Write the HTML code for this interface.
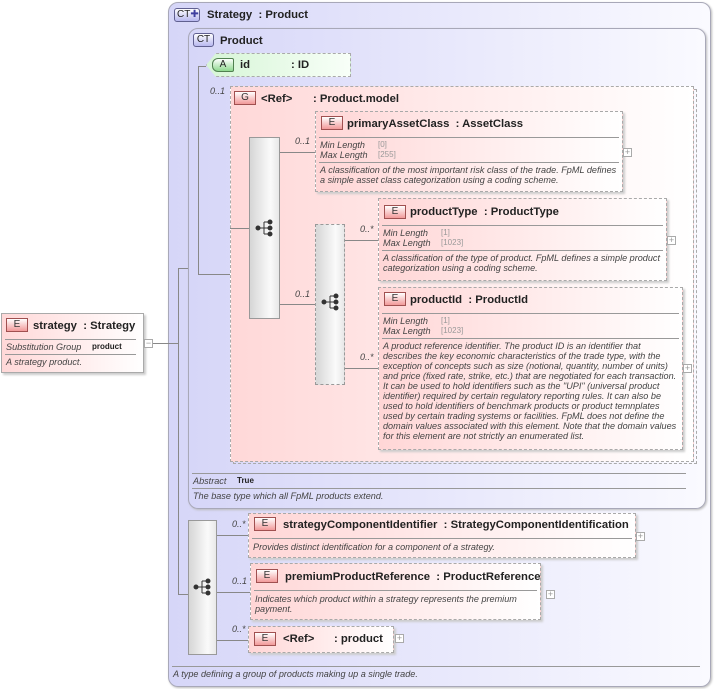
<!DOCTYPE html>
<html><head><meta charset="utf-8"><style>
*{margin:0;padding:0;box-sizing:border-box}
body{width:718px;height:689px;background:#fff;position:relative;overflow:hidden;font-family:"Liberation Sans",Arial,sans-serif;color:#222}
.a{position:absolute}
.ct{position:absolute;border:1px solid #a8a8b8;border-radius:10px;background:linear-gradient(to right,#d6d6f8,#fafaff);box-shadow:1px 1px 2px #bbb}
.el{position:absolute;border:1px dashed #a9a9a9;background:linear-gradient(to right,#ffd6d6,#fff);box-shadow:2px 2px 2px #ccc}
.badge{position:absolute;width:22px;height:14px;border:1px solid #a05050;background:linear-gradient(#fff,#f29a9a);font-size:10px;text-align:center;line-height:12px;color:#333}
.t{position:absolute;font-weight:bold;font-size:11.3px;white-space:nowrap;margin-top:2px}
.sep{position:absolute;height:1px;background:#999}
.it{position:absolute;font-style:italic;font-size:9.1px;line-height:10.3px;color:#444;white-space:nowrap}
.v{position:absolute;font-size:8px;color:#999;white-space:nowrap}
.seq{position:absolute;border:1px solid #999;background:linear-gradient(to right,#d6d6d6,#fafafa 70%,#e8e8e8)}
.ln{position:absolute;background:#888}
.m{position:absolute;font-style:italic;font-size:9px;color:#444}
.plus{position:absolute;width:9px;height:9px;border:1px solid #aaa;background:#fff;font-size:9px;line-height:7px;text-align:center;color:#999}
</style></head><body>

<div class="ct" style="left:168px;top:2px;width:543px;height:685px"></div>
<div class="a" style="left:174px;top:8px;width:26px;height:14px;border:1px solid #606090;border-radius:3px;background:linear-gradient(#fff,#b8b8f0);font-size:10px;line-height:12px;padding-left:2px">CT<span style="color:#4040a0">✚</span></div>
<div class="t" style="left:207px;top:7px">Strategy&nbsp; : Product</div>

<div class="ct" style="left:188px;top:28px;width:518px;height:481px"></div>
<div class="a" style="left:193px;top:33px;width:21px;height:14px;border:1px solid #606090;border-radius:3px;background:linear-gradient(#fff,#b8b8f0);font-size:10px;line-height:12px;text-align:center">CT</div>
<div class="t" style="left:220px;top:33px">Product</div>

<div class="a" style="left:206px;top:53px;width:145px;height:24px;border:1px dashed #aaa;background:linear-gradient(to right,#d6f5d6,#f8fff8);clip-path:polygon(10px 0,100% 0,100% 100%,10px 100%,0 50%)"></div>
<div class="a" style="left:212px;top:58px;width:22px;height:14px;border:1px solid #508050;border-radius:6px 2px 2px 6px;background:linear-gradient(#fff,#8ed88e);font-size:10px;line-height:12px;text-align:center">A</div>
<div class="t" style="left:240px;top:57px">id</div>
<div class="t" style="left:291px;top:57px">: ID</div>

<div class="ln" style="left:198px;top:66px;width:1px;height:209px"></div>
<div class="ln" style="left:198px;top:66px;width:8px;height:1px"></div>
<div class="ln" style="left:198px;top:274px;width:32px;height:1px"></div>
<div class="ln" style="left:178px;top:268px;width:10px;height:1px"></div>
<div class="ln" style="left:178px;top:268px;width:1px;height:327px"></div>
<div class="ln" style="left:178px;top:594px;width:10px;height:1px"></div>
<div class="ln" style="left:144px;top:343px;width:34px;height:1px"></div>

<div class="m" style="left:210px;top:86px">0..1</div>
<div class="a" style="left:233px;top:89px;width:464px;height:375px;border:1px dashed #aaa"></div>
<div class="a" style="left:230px;top:86px;width:464px;height:376px;border:1px dashed #aaa;background:linear-gradient(to right,#ffd8d8,#fff)"></div>
<div class="badge" style="left:234px;top:91px;border-radius:0">G</div>
<div class="t" style="left:261px;top:91px">&lt;Ref&gt;</div>
<div class="t" style="left:313px;top:91px">: Product.model</div>

<div class="seq" style="left:249px;top:137px;width:31px;height:182px"></div>
<svg class="a" style="left:255px;top:219px" width="20" height="18"><g fill="#333" stroke="#333"><line x1="3" y1="9" x2="9" y2="9"/><line x1="9" y1="3" x2="9" y2="15"/><line x1="9" y1="3" x2="15" y2="3"/><line x1="9" y1="9" x2="15" y2="9"/><line x1="9" y1="15" x2="15" y2="15"/><circle cx="3" cy="9" r="2"/><circle cx="15" cy="3" r="2"/><circle cx="15" cy="9" r="2"/><circle cx="15" cy="15" r="2"/></g></svg>
<div class="ln" style="left:230px;top:228px;width:19px;height:1px"></div>
<div class="ln" style="left:280px;top:152px;width:35px;height:1px"></div>
<div class="ln" style="left:280px;top:304px;width:35px;height:1px"></div>
<div class="m" style="left:295px;top:136px">0..1</div>
<div class="m" style="left:295px;top:289px">0..1</div>

<div class="el" style="left:315px;top:111px;width:308px;height:81px"></div>
<div class="badge" style="left:321px;top:116px">E</div>
<div class="t" style="left:347px;top:116px">primaryAssetClass&nbsp; : AssetClass</div>
<div class="sep" style="left:319px;top:137px;width:300px"></div>
<div class="it" style="left:320px;top:140px">Min Length<br>Max Length</div>
<div class="v" style="left:378px;top:140px;line-height:10.3px">[0]<br>[255]</div>
<div class="sep" style="left:319px;top:162px;width:300px"></div>
<div class="it" style="left:320px;top:165px">A classification of the most important risk class of the trade. FpML defines<br>a simple asset class categorization using a coding scheme.</div>
<div class="plus" style="left:623px;top:148px">+</div>

<div class="seq" style="left:315px;top:224px;width:30px;height:161px;border-style:dashed"></div>
<svg class="a" style="left:321px;top:293px" width="20" height="18"><g fill="#333" stroke="#333"><line x1="3" y1="9" x2="9" y2="9"/><line x1="9" y1="3" x2="9" y2="15"/><line x1="9" y1="3" x2="15" y2="3"/><line x1="9" y1="9" x2="15" y2="9"/><line x1="9" y1="15" x2="15" y2="15"/><circle cx="3" cy="9" r="2"/><circle cx="15" cy="3" r="2"/><circle cx="15" cy="9" r="2"/><circle cx="15" cy="15" r="2"/></g></svg>
<div class="ln" style="left:345px;top:240px;width:33px;height:1px"></div>
<div class="ln" style="left:345px;top:368px;width:33px;height:1px"></div>
<div class="m" style="left:360px;top:224px">0..*</div>
<div class="m" style="left:360px;top:352px">0..*</div>

<div class="el" style="left:378px;top:198px;width:289px;height:83px"></div>
<div class="badge" style="left:384px;top:205px">E</div>
<div class="t" style="left:410px;top:204px">productType&nbsp; : ProductType</div>
<div class="sep" style="left:382px;top:225px;width:281px"></div>
<div class="it" style="left:383px;top:228px">Min Length<br>Max Length</div>
<div class="v" style="left:441px;top:228px;line-height:10.3px">[1]<br>[1023]</div>
<div class="sep" style="left:382px;top:250px;width:281px"></div>
<div class="it" style="left:383px;top:253px">A classification of the type of product. FpML defines a simple product<br>categorization using a coding scheme.</div>
<div class="plus" style="left:667px;top:236px">+</div>

<div class="el" style="left:378px;top:287px;width:305px;height:163px"></div>
<div class="badge" style="left:384px;top:292px">E</div>
<div class="t" style="left:410px;top:292px">productId&nbsp; : ProductId</div>
<div class="sep" style="left:382px;top:313px;width:297px"></div>
<div class="it" style="left:383px;top:316px">Min Length<br>Max Length</div>
<div class="v" style="left:441px;top:316px;line-height:10.3px">[1]<br>[1023]</div>
<div class="sep" style="left:382px;top:338px;width:297px"></div>
<div class="it" style="left:383px;top:341px;line-height:10px">A product reference identifier. The product ID is an identifier that<br>describes the key economic characteristics of the trade type, with the<br>exception of concepts such as size (notional, quantity, number of units)<br>and price (fixed rate, strike, etc.) that are negotiated for each transaction.<br>It can be used to hold identifiers such as the "UPI" (universal product<br>identifier) required by certain regulatory reporting rules. It can also be<br>used to hold identifiers of benchmark products or product temnplates<br>used by certain trading systems or facilities. FpML does not define the<br>domain values associated with this element. Note that the domain values<br>for this element are not strictly an enumerated list.</div>
<div class="plus" style="left:683px;top:364px">+</div>

<div class="sep" style="left:192px;top:473px;width:494px"></div>
<div class="it" style="left:193px;top:476px">Abstract</div>
<div class="a" style="left:237px;top:476px;font-size:8px;font-weight:bold">True</div>
<div class="sep" style="left:192px;top:488px;width:494px"></div>
<div class="it" style="left:193px;top:491px">The base type which all FpML products extend.</div>

<div class="seq" style="left:188px;top:520px;width:29px;height:135px"></div>
<svg class="a" style="left:193px;top:578px" width="20" height="18"><g fill="#333" stroke="#333"><line x1="3" y1="9" x2="9" y2="9"/><line x1="9" y1="3" x2="9" y2="15"/><line x1="9" y1="3" x2="15" y2="3"/><line x1="9" y1="9" x2="15" y2="9"/><line x1="9" y1="15" x2="15" y2="15"/><circle cx="3" cy="9" r="2"/><circle cx="15" cy="3" r="2"/><circle cx="15" cy="9" r="2"/><circle cx="15" cy="15" r="2"/></g></svg>
<div class="ln" style="left:217px;top:535px;width:31px;height:1px"></div>
<div class="ln" style="left:217px;top:592px;width:33px;height:1px"></div>
<div class="ln" style="left:217px;top:640px;width:31px;height:1px"></div>
<div class="m" style="left:232px;top:519px">0..*</div>
<div class="m" style="left:232px;top:576px">0..1</div>
<div class="m" style="left:232px;top:624px">0..*</div>

<div class="el" style="left:248px;top:513px;width:388px;height:45px"></div>
<div class="badge" style="left:254px;top:517px">E</div>
<div class="t" style="left:283px;top:517px">strategyComponentIdentifier&nbsp; : StrategyComponentIdentification</div>
<div class="sep" style="left:252px;top:538px;width:380px"></div>
<div class="it" style="left:253px;top:542px">Provides distinct identification for a component of a strategy.</div>
<div class="plus" style="left:636px;top:532px">+</div>

<div class="el" style="left:250px;top:563px;width:291px;height:57px"></div>
<div class="badge" style="left:256px;top:569px">E</div>
<div class="t" style="left:285px;top:569px">premiumProductReference&nbsp; : ProductReference</div>
<div class="sep" style="left:254px;top:590px;width:283px"></div>
<div class="it" style="left:255px;top:594px">Indicates which product within a strategy represents the premium<br>payment.</div>
<div class="plus" style="left:546px;top:590px">+</div>

<div class="el" style="left:248px;top:626px;width:146px;height:27px"></div>
<div class="badge" style="left:254px;top:632px">E</div>
<div class="t" style="left:283px;top:631px">&lt;Ref&gt;</div>
<div class="t" style="left:334px;top:631px">: product</div>
<div class="plus" style="left:395px;top:634px">+</div>

<div class="sep" style="left:172px;top:666px;width:528px"></div>
<div class="it" style="left:173px;top:669px">A type defining a group of products making up a single trade.</div>

<div class="a" style="left:1px;top:313px;width:143px;height:60px;border:1px solid #aaa;background:linear-gradient(to right,#ffd8d8,#fff);box-shadow:2px 2px 2px #ccc"></div>
<div class="badge" style="left:6px;top:318px">E</div>
<div class="t" style="left:33px;top:318px">strategy&nbsp; : Strategy</div>
<div class="sep" style="left:5px;top:339px;width:131px"></div>
<div class="it" style="left:6px;top:342px">Substitution Group</div>
<div class="a" style="left:92px;top:342px;font-size:8px;font-weight:bold">product</div>
<div class="sep" style="left:5px;top:354px;width:131px"></div>
<div class="it" style="left:6px;top:357px">A strategy product.</div>
<div class="plus" style="left:144px;top:339px;line-height:6px">−</div>
</body></html>
